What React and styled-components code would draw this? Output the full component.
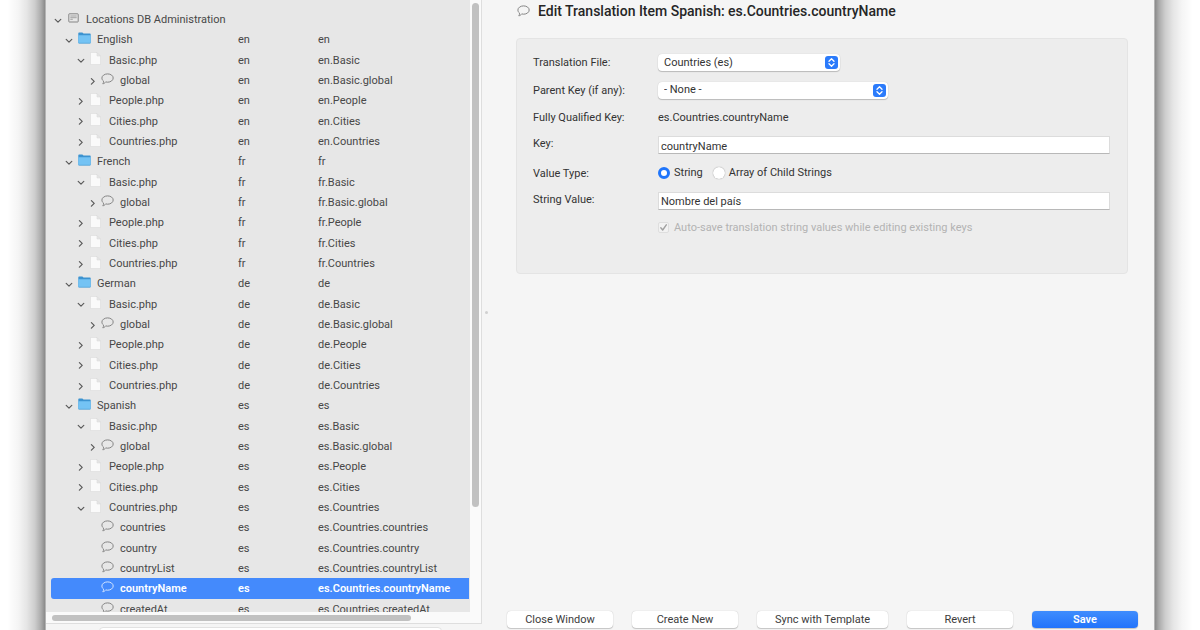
import React from "react";
import styled, { createGlobalStyle, css } from "styled-components";

const Global = createGlobalStyle`
  *, *::before, *::after { box-sizing: border-box; }
  body {
    margin: 0;
    background: #fff;
    color: #3c3c3c;
    font: 11px/16px Roboto, "Liberation Sans", sans-serif;
  }
  button, input, select { font: inherit; color: inherit; margin: 0; }
`;

const shade = `rgba(0,0,0,.46) 0, rgba(0,0,0,.33) 4px, rgba(0,0,0,.2) 10px, rgba(0,0,0,.1) 18px, rgba(0,0,0,.04) 27px, transparent 38px`;

const Desktop = styled.div`
  height: 100vh;
  overflow: hidden;
  padding: 0 45px;
  background:
    linear-gradient(to left, ${shade}) left / 45px 100% no-repeat,
    linear-gradient(to right, ${shade}) right / 45px 100% no-repeat,
    #fff;
`;

const Window = styled.div`
  display: flex;
  height: 100%;
  background: #f5f5f5;
  border: solid #b4b4b4;
  border-width: 0 1px;
`;

const Sidebar = styled.aside`
  display: flex;
  flex-direction: column;
  flex: none;
  width: 436px;
`;

const TreeFrame = styled.div`
  display: grid;
  grid-template: minmax(0, 1fr) 11px / minmax(0, 1fr) 11px;
  flex: 1;
  min-height: 0;
  background: #fafafa;
  border: solid #dedede;
  border-width: 0 1px 1px 0;
`;

const TreeView = styled.div`
  overflow: hidden;
  padding: 9px 0 0 5px;
  background: #e7e7e7;
`;

const TreeTable = styled.ul`
  display: grid;
  grid-template-rows: repeat(${(p) => p.$count}, 1fr);
  height: 610px;
  margin: 0;
  padding: 0;
  list-style: none;
`;

const TreeRow = styled.li`
  display: grid;
  grid-template-columns: 187px 80px 1fr;
  align-items: center;
  margin-right: 1px;
  padding-top: 2px;
  white-space: nowrap;
  color: #484848;
  ${(p) =>
    p.$selected &&
    css`
      background: #448afc;
      border-radius: 3px 0 0 3px;
      color: #fff;
      font-weight: 600;
    `}
`;

const NameCell = styled.span`
  display: flex;
  align-items: center;
  padding-left: ${(p) => p.$indent}px;
`;

const Twisty = styled.span`
  display: flex;
  flex: none;
  width: ${(p) => p.$width}px;
  padding-bottom: 1px;
`;

const IconSlot = styled.span`
  display: flex;
  flex: none;
  width: ${(p) => p.$width}px;
  padding-bottom: 4px;
`;

const VerticalScroll = styled.div`
  padding: 3px 2px 0;
`;

const VerticalThumb = styled.div`
  height: 504px;
  border-radius: 4px;
  background: #c1c1c1;
`;

const HorizontalScroll = styled.div`
  grid-column: 1 / -1;
  padding: 3px 70px 2px 6px;
`;

const HorizontalThumb = styled.div`
  height: 6px;
  border-radius: 3px;
  background: #c1c1c1;
`;

const FilterBar = styled.div`
  flex: none;
  height: 6px;
  padding: 3px 40px 0 53px;
  overflow: hidden;
`;

const FilterInput = styled.input`
  display: block;
  width: 100%;
  height: 20px;
  border: 1px solid #e2e2e2;
  border-radius: 4px;
  background: #fff;
`;

const Splitter = styled.div`
  display: flex;
  align-items: center;
  justify-content: center;
  flex: none;
  width: 8px;
  padding-bottom: 6px;
`;

const Grip = styled.span`
  width: 3px;
  height: 3px;
  border-radius: 2px;
  background: #d0d0d0;
`;

const Editor = styled.main`
  display: flex;
  flex-direction: column;
  flex: 1;
  min-width: 0;
`;

const Title = styled.h1`
  display: flex;
  align-items: center;
  gap: 8px;
  height: 22px;
  margin: 0 0 16px;
  padding-left: 27px;
  color: #262626;
  font-size: 14px;
  font-weight: 500;
`;

const Group = styled.section`
  height: 236px;
  margin: 0 26px;
  padding: 10px 17px 0 16px;
  border: 1px solid #e4e4e4;
  border-radius: 4px;
  background: #ededed;
`;

const Form = styled.form`
  display: grid;
  grid-template-columns: 125px minmax(0, 1fr);
  grid-template-rows: repeat(7, 1fr);
  align-items: center;
  height: 193px;
  color: #333;
`;

const Caption = styled.label`
  padding-top: 1px;
`;

const InputCaption = styled.label`
  padding-bottom: 2px;
`;

const FieldControl = styled.div`
  display: flex;
  align-items: center;
  grid-column: 2;
`;

const SelectWrap = styled.div`
  position: relative;
  width: ${(p) => p.$width}px;
`;

const Select = styled.select`
  display: block;
  width: 100%;
  height: 17px;
  padding: 0 20px 0 6px;
  appearance: none;
  border: 0;
  border-radius: 4px;
  background: #fff;
  box-shadow: 0 0 1px rgba(0, 0, 0, 0.2), 0 1px 1px rgba(0, 0, 0, 0.2);
`;

const SelectArrows = styled.span`
  position: absolute;
  top: 2px;
  right: 2px;
  display: flex;
  pointer-events: none;
`;

const TextInput = styled.input`
  width: 100%;
  height: 18px;
  padding: 2px 2px 0;
  border: 1px solid #dcdcdc;
  border-bottom-color: #b8b8b8;
  border-radius: 0;
  background: #fff;
`;

const Choice = styled.label`
  display: flex;
  align-items: center;
  gap: 4px;
  margin-right: 10px;
  color: ${(p) => (p.$disabled ? "#b3b3b3" : "inherit")};
`;

const Radio = styled.input`
  appearance: none;
  width: 12px;
  height: 12px;
  border-radius: 50%;
  background: #fff;
  box-shadow: 0 0 1px rgba(0, 0, 0, 0.5);
  &:checked {
    border: 3px solid #1f75fb;
    box-shadow: none;
  }
`;

const Check = styled.span`
  display: grid;
  width: 12px;
  height: 12px;
  & > * { grid-area: 1 / 1; }
`;

const Checkbox = styled.input`
  appearance: none;
  width: 11px;
  height: 11px;
  border: 1px solid #dedede;
  border-radius: 2px;
  background: #f2f2f2;
`;

const Actions = styled.footer`
  display: flex;
  justify-content: flex-end;
  gap: 19px;
  margin-top: auto;
  padding: 0 16px 2px;
`;

const Button = styled.button`
  width: ${(p) => (p.$wide ? 131 : 106)}px;
  height: 17px;
  padding: 0;
  border: 0;
  border-radius: 4px;
  white-space: nowrap;
  line-height: 17px;
  background: #fff;
  box-shadow: 0 0 1px rgba(0, 0, 0, 0.25), 0 1px 1px rgba(0, 0, 0, 0.18);
  ${(p) =>
    p.$primary &&
    css`
      background: linear-gradient(#3f8dfd, #2273fb);
      color: #fff;
      font-weight: 600;
    `}
`;

const Chevron = ({ open }) => (
  <svg width="8" height="8" viewBox="0 0 8 8" fill="none" stroke="#5a5a5a" strokeWidth="1.2" strokeLinecap="round" strokeLinejoin="round">
    <path d={open ? "M1.2 3.4 4 6.2 6.8 3.4" : "M2.4 1.6 5.2 4.4 2.4 7.2"} />
  </svg>
);

const Bubble = ({ color = "#858585" }) => (
  <svg width="13" height="12" viewBox="0 0 13 12" fill="none" stroke={color} strokeWidth="1" strokeLinejoin="round">
    <path d="M6.6.9C9.700.9 12.200 2.700 12.200 5S9.700 9.200 6.600 9.200C5.900 9.200 5.300 9.100 4.700 8.900 4 9.900 2.900 10.700 1.800 10.800 2.400 10 2.600 9.200 2.500 8.100 1.500 7.300.9 6.200.9 5 .9 2.700 3.500.9 6.600.9Z" />
  </svg>
);

const Folder = () => (
  <svg width="13" height="12" viewBox="0 0 13 12">
    <path d="M.3 1.300Q.3.500 1.100.500H4.400L5.500 1.500H12Q12.700 1.500 12.700 2.300V10.600Q12.700 11.300 12 11.300H1Q.3 11.300.3 10.600Z" fill="#3c93d0" />
    <path d="M.3 3.200H12.700V10.600Q12.700 11.300 12 11.300H1Q.3 11.300.3 10.600Z" fill="#74c3f4" />
    <path d="M.6 11.200H12.400" stroke="#4c9fd4" strokeWidth=".6" />
  </svg>
);

const FileIcon = () => (
  <svg width="11" height="13" viewBox="0 0 11 13">
    <path d="M.5.5H7L10.500 4V12.500H.5Z" fill="#fafafa" stroke="#dcdcdc" strokeWidth=".6" />
    <path d="M7 .5V4H10.500Z" fill="#e8e8e8" stroke="#d6d6d6" strokeWidth=".5" />
  </svg>
);

const DatabaseIcon = () => (
  <svg width="11" height="10" viewBox="0 0 11 10" fill="none" stroke="#858585" strokeWidth="1">
    <rect x=".8" y=".8" width="9.400" height="8.200" rx=".5" />
    <path d="M2.300 3H8.700M2.300 4.700H8.700M2.300 6.300H4.800" strokeWidth=".7" />
  </svg>
);

const UpDown = () => (
  <svg width="13" height="13" viewBox="0 0 13 13">
    <rect width="13" height="13" rx="3" fill="#2b7bfb" />
    <path d="M4 5.200 6.500 2.800 9 5.200M4 7.800 6.500 10.200 9 7.800" fill="none" stroke="#fff" strokeWidth="1.300" strokeLinecap="round" strokeLinejoin="round" />
  </svg>
);

const kinds = {
  db: { Icon: DatabaseIcon, indent: 3, twisty: 14, slot: 18 },
  folder: { Icon: Folder, indent: 14, twisty: 13, slot: 19 },
  file: { Icon: FileIcon, indent: 26, twisty: 13, slot: 19 },
  key: { Icon: Bubble, indent: 38, twisty: 12, slot: 19 },
};

const languages = [["English", "en"], ["French", "fr"], ["German", "de"], ["Spanish", "es"]];
const rows = [{ type: "db", name: "Locations DB Administration", open: true }];
languages.forEach(([language, code]) => {
  const spanish = code === "es";
  rows.push({ type: "folder", name: language, code, path: code, open: true });
  rows.push({ type: "file", name: "Basic.php", code, path: `${code}.Basic`, open: true });
  rows.push({ type: "key", name: "global", code, path: `${code}.Basic.global`, open: false });
  ["People", "Cities", "Countries"].forEach((file) =>
    rows.push({ type: "file", name: `${file}.php`, code, path: `${code}.${file}`, open: spanish && file === "Countries" })
  );
});
["countries", "country", "countryList", "countryName", "createdAt"].forEach((name) =>
  rows.push({ type: "key", name, code: "es", path: `es.Countries.${name}`, selected: name === "countryName" })
);

function TreeItem({ type, name, code, path, open, selected }) {
  const { Icon, indent, twisty, slot } = kinds[type];
  return (
    <TreeRow $selected={selected}>
      <NameCell $indent={indent}>
        <Twisty $width={twisty}>{open !== undefined && <Chevron open={open} />}</Twisty>
        <IconSlot $width={slot}>
          <Icon {...(selected ? { color: "#d4e5ff" } : {})} />
        </IconSlot>
        {name}
      </NameCell>
      <span>{code}</span>
      <span>{path}</span>
    </TreeRow>
  );
}

function PopUp({ id, width, value }) {
  return (
    <SelectWrap $width={width}>
      <Select id={id} defaultValue={value}>
        <option>{value}</option>
      </Select>
      <SelectArrows>
        <UpDown />
      </SelectArrows>
    </SelectWrap>
  );
}

export default function App() {
  return (
    <Desktop>
      <Global />
      <Window>
        <Sidebar>
          <TreeFrame>
            <TreeView>
              <TreeTable $count={rows.length}>
                {rows.map((row, i) => (
                  <TreeItem key={i} {...row} />
                ))}
              </TreeTable>
            </TreeView>
            <VerticalScroll>
              <VerticalThumb />
            </VerticalScroll>
            <HorizontalScroll>
              <HorizontalThumb />
            </HorizontalScroll>
          </TreeFrame>
          <FilterBar>
            <FilterInput aria-label="Filter" />
          </FilterBar>
        </Sidebar>
        <Splitter>
          <Grip />
        </Splitter>
        <Editor>
          <Title>
            <Bubble />
            Edit Translation Item Spanish: es.Countries.countryName
          </Title>
          <Group>
            <Form onSubmit={(e) => e.preventDefault()}>
              <Caption htmlFor="file">Translation File:</Caption>
              <PopUp id="file" width={182} value="Countries (es)" />
              <Caption htmlFor="parent">Parent Key (if any):</Caption>
              <PopUp id="parent" width={230} value="- None -" />
              <Caption as="span">Fully Qualified Key:</Caption>
              <Caption as="span">es.Countries.countryName</Caption>
              <InputCaption htmlFor="key">Key:</InputCaption>
              <TextInput id="key" defaultValue="countryName" />
              <Caption as="span" id="type">Value Type:</Caption>
              <FieldControl role="radiogroup" aria-labelledby="type">
                <Choice>
                  <Radio type="radio" name="type" defaultChecked />
                  String
                </Choice>
                <Choice>
                  <Radio type="radio" name="type" />
                  Array of Child Strings
                </Choice>
              </FieldControl>
              <InputCaption htmlFor="value">String Value:</InputCaption>
              <TextInput id="value" defaultValue="Nombre del país" />
              <FieldControl>
                <Choice $disabled>
                  <Check>
                    <Checkbox type="checkbox" defaultChecked disabled />
                    <svg width="11" height="11" viewBox="0 0 11 11" fill="none" stroke="#a0a0a0" strokeWidth="1.400" strokeLinecap="round" strokeLinejoin="round">
                      <path d="M2.800 5.800 4.700 8 8.300 2.800" />
                    </svg>
                  </Check>
                  Auto-save translation string values while editing existing keys
                </Choice>
              </FieldControl>
            </Form>
          </Group>
          <Actions>
            <Button type="button">Close Window</Button>
            <Button type="button">Create New</Button>
            <Button type="button" $wide>Sync with Template</Button>
            <Button type="button">Revert</Button>
            <Button type="button" $primary>Save</Button>
          </Actions>
        </Editor>
      </Window>
    </Desktop>
  );
}
